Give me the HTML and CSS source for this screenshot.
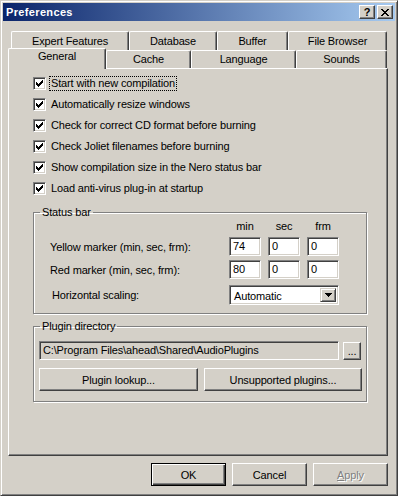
FILE: index.html
```html
<!DOCTYPE html>
<html lang="en"><head>
  <meta charset="UTF-8">
  <title>Preferences</title>
  <link rel="stylesheet" href="styles.css">
</head><body>

<div class="window">
  <div class="titlebar">
    <span class="title">Preferences</span>
    <div class="caption-btns">
      <span class="cbtn help">?</span>
      <span class="cbtn close">
        <svg width="8" height="7" viewBox="0 0 8 7" shape-rendering="crispEdges"><path d="M0 0h2v1h-2zM6 0h2v1h-2zM1 1h2v1h-2zM5 1h2v1h-2zM2 2h4v1h-4zM3 3h2v1h-2zM2 4h4v1h-4zM1 5h2v1h-2zM5 5h2v1h-2zM0 6h2v1h-2zM6 6h2v1h-2z" fill="#000"/></svg>
      </span>
    </div>
  </div>

  <div class="tabstrip">
    <div class="tabrow back">
      <span class="tab w-expert">Expert Features</span>
      <span class="tab w-database">Database</span>
      <span class="tab w-buffer">Buffer</span>
      <span class="tab w-browser">File Browser</span>
    </div>
    <div class="tabrow front">
      <span class="tab selected w-general">General</span>
      <span class="tab w-cache">Cache</span>
      <span class="tab w-language">Language</span>
      <span class="tab w-sounds">Sounds</span>
    </div>
  </div>

  <div class="panel">
    <ul class="checks">
      <li><span class="check"></span><span class="label focus">Start with new compilation</span></li>
      <li><span class="check"></span><span class="label">Automatically resize windows</span></li>
      <li><span class="check"></span><span class="label">Check for correct CD format before burning</span></li>
      <li><span class="check"></span><span class="label">Check Joliet filenames before burning</span></li>
      <li><span class="check"></span><span class="label">Show compilation size in the Nero status bar</span></li>
      <li><span class="check"></span><span class="label">Load anti-virus plug-in at startup</span></li>
    </ul>

    <fieldset class="group status">
      <legend>Status bar</legend>
      <div class="markers">
        <span></span><span class="colhead">min</span><span class="colhead">sec</span><span class="colhead">frm</span>
        <span class="rowlabel">Yellow marker (min, sec, frm):</span>
        <span class="field">74</span><span class="field">0</span><span class="field">0</span>
        <span class="rowlabel">Red marker (min, sec, frm):</span>
        <span class="field">80</span><span class="field">0</span><span class="field">0</span>
        <span class="rowlabel scale">Horizontal scaling:</span>
        <div class="combo">
          <span class="combo-text">Automatic</span>
          <span class="combo-btn"><svg width="7" height="4" viewBox="0 0 7 4" shape-rendering="crispEdges"><path d="M0 0h7v1h-7zM1 1h5v1h-5zM2 2h3v1h-3zM3 3h1v1h-1z" fill="#000"/></svg></span>
        </div>
      </div>
    </fieldset>

    <fieldset class="group plugin">
      <legend>Plugin directory</legend>
      <div class="path-row">
        <span class="field path">C:\Program Files\ahead\Shared\AudioPlugins</span>
        <span class="btn browse">...</span>
      </div>
      <div class="btn-row">
        <span class="btn wide1">Plugin lookup...</span>
        <span class="btn wide2">Unsupported plugins...</span>
      </div>
    </fieldset>
  </div>

  <div class="footer">
    <span class="btn default">OK</span>
    <span class="btn">Cancel</span>
    <span class="btn disabled"><u>A</u>pply</span>
  </div>
</div>

</body></html>
```

FILE: styles.css
```css
body{margin:0;font-family:"Liberation Sans",Arial,sans-serif;font-size:11px;letter-spacing:-0.15px;color:#000;background:#d4d0c8;}
.window{width:398px;height:496px;box-sizing:border-box;background:#d4d0c8;border:1px solid;border-color:#d4d0c8 #404040 #404040 #d4d0c8;box-shadow:inset 1px 1px #fff,inset -1px -1px #808080;padding:2px;}

/* caption */
.titlebar{height:18px;display:flex;align-items:center;justify-content:space-between;background:linear-gradient(to right,#0a246a,#a6caf0);padding:0 2px 0 3px;}
.title{color:#fff;font-weight:bold;font-size:11px;letter-spacing:0.35px;}
.caption-btns{display:flex;gap:2px;}
.cbtn{width:16px;height:14px;box-sizing:border-box;display:flex;align-items:center;justify-content:center;background:#d4d0c8;border:1px solid;border-color:#fff #404040 #404040 #fff;box-shadow:inset -1px -1px #808080;font-weight:bold;font-size:11px;line-height:12px;}

/* tabs */
.tabstrip{margin:10px 0 0 5px;}
.tabrow{display:flex;}
.tabrow.back{height:19px;padding-left:3px;}
.tabrow.front{height:18px;}
.tab{box-sizing:border-box;height:100%;text-align:center;line-height:13px;border:1px solid;border-bottom:none;border-color:#fff #404040 #404040 #fff;box-shadow:inset -1px 0 #808080;border-radius:2px 2px 0 0;background:#d4d0c8;}
.back .tab{padding-top:3px;}
.front .tab{padding-top:2px;}
.tab.selected{position:relative;z-index:1;height:21px;margin-top:-2px;padding-top:1px;}
.w-expert{width:118px;}
.w-database{width:88px;}
.w-buffer{width:71px;}
.w-browser{width:99px;}
.w-general{width:98px;}
.w-cache{width:85px;}
.w-language{width:105px;}
.w-sounds{width:91px;}

/* page */
.panel{width:380px;height:388px;box-sizing:border-box;margin-left:5px;border:1px solid;border-color:#fff #404040 #404040 #fff;box-shadow:inset -1px -1px #808080;}
.checks{list-style:none;margin:0;padding:4px 0 0 24px;}
.checks li{height:21px;display:flex;align-items:center;}
.check{width:13px;height:13px;box-sizing:border-box;background:#fff url("data:image/svg+xml,%3Csvg xmlns='http://www.w3.org/2000/svg' width='9' height='9' shape-rendering='crispEdges'%3E%3Cpath d='M6 0h1v1h-1zM5 1h2v1h-2zM0 2h1v1h-1zM4 2h3v1h-3zM0 3h2v1h-2zM3 3h3v1h-3zM0 4h5v1h-5zM1 5h3v1h-3zM2 6h1v1h-1z' transform='translate(1 1)'/%3E%3C/svg%3E") no-repeat 1px 1px;border:1px solid;border-color:#808080 #fff #fff #808080;box-shadow:inset 1px 1px #404040,inset -1px -1px #d4d0c8;margin-right:4px;}
.label{line-height:13px;padding:0 1px;}
.label.focus{outline:1px dotted #000;outline-offset:0;}

.group{margin:7px 0 0 24px;width:334px;box-sizing:border-box;padding:0;border:1px solid #808080;box-shadow:1px 1px #fff,inset 1px 1px #fff;}
.group legend{margin-left:6px;padding:0 2px;line-height:13px;}

.markers{display:grid;grid-template-columns:172px 32px 32px 32px;grid-template-rows:13px 19px 19px 22px;column-gap:7px;row-gap:4px;padding:1px 0 8px 16px;}
.colhead{text-align:center;line-height:13px;}
.rowlabel{align-self:center;}
.rowlabel.scale{padding-left:2px;align-self:end;line-height:20px;}
.field{box-sizing:border-box;background:#fff;border:1px solid;border-color:#808080 #fff #fff #808080;box-shadow:inset 1px 1px #404040,inset -1px -1px #d4d0c8;padding:0 3px;line-height:17px;white-space:nowrap;overflow:hidden;}
.combo{grid-column:2 / span 3;align-self:end;height:20px;box-sizing:border-box;background:#fff;border:1px solid;border-color:#808080 #fff #fff #808080;box-shadow:inset 1px 1px #404040,inset -1px -1px #d4d0c8;padding:2px;display:flex;justify-content:space-between;}
.combo-text{padding-left:2px;line-height:16px;}
.combo-btn{width:16px;height:14px;box-sizing:border-box;display:flex;align-items:center;justify-content:center;background:#d4d0c8;border:1px solid;border-color:#d4d0c8 #404040 #404040 #d4d0c8;box-shadow:inset 1px 1px #fff,inset -1px -1px #808080;}

.group.plugin{margin-top:6px;}
.path-row{display:flex;gap:4px;align-items:flex-start;padding:8px 0 0 5px;}
.field.path{width:300px;height:19px;background:#d4d0c8;}
.btn{box-sizing:border-box;display:flex;align-items:center;justify-content:center;background:#d4d0c8;border:1px solid;border-color:#fff #404040 #404040 #fff;box-shadow:inset -1px -1px #808080,inset 1px 1px #d4d0c8;}
.btn.browse{width:18px;height:18px;margin-top:1px;line-height:12px;}
.btn-row{display:flex;gap:6px;padding:8px 0 10px 5px;}
.btn-row .btn{height:23px;}
.wide1{width:159px;}
.wide2{width:158px;}

.footer{display:flex;justify-content:flex-end;gap:6px;margin:7px 7px 0 0;}
.footer .btn{width:75px;height:23px;}
.btn.default{border-color:#000;box-shadow:inset 1px 1px #fff,inset -1px -1px #404040,inset -2px -2px #808080;}
.btn.disabled{color:#808080;text-shadow:1px 1px #fff;}
```
